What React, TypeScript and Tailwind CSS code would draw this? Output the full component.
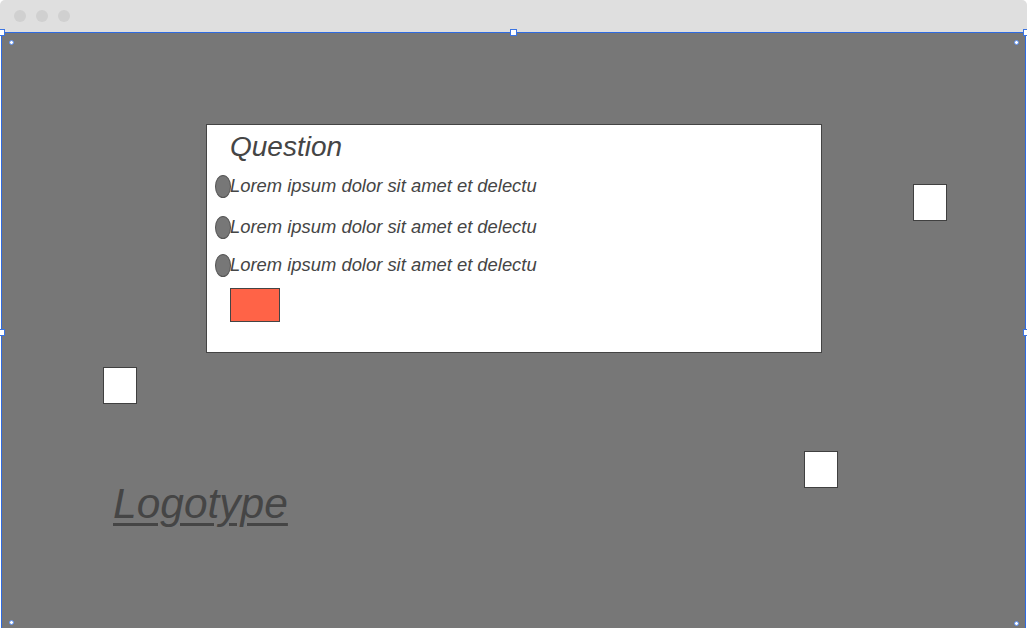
const rows = [
  { label: "Lorem ipsum dolor sit amet et delectu", gap: "mt-[13px]" },
  { label: "Lorem ipsum dolor sit amet et delectu", gap: "mt-[17px]" },
  { label: "Lorem ipsum dolor sit amet et delectu", gap: "mt-[14px]" },
];

// little square resize handles sitting on the selection border
function Handle({ className }: { className: string }) {
  return (
    <div
      className={`absolute h-[7px] w-[7px] border border-[#3b74e2] bg-white ${className}`}
    />
  );
}

function Dot({ className }: { className: string }) {
  return (
    <div
      className={`absolute h-[5px] w-[5px] rounded-full border border-[#5b8ff0] bg-white ${className}`}
    />
  );
}

function Box({ className }: { className: string }) {
  return (
    <div
      className={`absolute h-[37px] w-[34px] border border-[#404040] bg-white ${className}`}
    />
  );
}

export default function App() {
  return (
    <div className="relative h-[628px] w-[1027px] overflow-hidden bg-white font-['Liberation_Sans',Arial,sans-serif]">
      {/* window bar */}
      <div className="flex h-8 items-center gap-[10px] rounded-t-[5px] bg-[#dfdfdf] pl-[14px]">
        <span className="h-3 w-3 rounded-full bg-[#d0d0d0]" />
        <span className="h-3 w-3 rounded-full bg-[#d0d0d0]" />
        <span className="h-3 w-3 rounded-full bg-[#d0d0d0]" />
      </div>

      {/* canvas */}
      <div className="relative ml-px h-[596px] w-[1025px] border border-b-0 border-[#2f6be0] bg-[#777777]">
        <div className="absolute left-[204px] top-[91px] h-[229px] w-[616px] border border-[#444444] bg-white">
          <div className="pl-[23px] pt-2 text-[28px] italic leading-none text-[#454545]">
            Question
          </div>
          {rows.map((row, i) => (
            <div key={i} className={`flex h-6 items-center ${row.gap}`}>
              <span className="ml-2 h-[23px] w-4 shrink-0 rounded-[50%] border border-[#555555] bg-[#777777]" />
              <span className="-ml-px text-[18.4px] italic leading-none text-[#454545]">
                {row.label}
              </span>
            </div>
          ))}
          <div className="ml-[23px] mt-[11px] h-[34px] w-[50px] border border-[#444444] bg-[#ff6347]" />
        </div>

        <Box className="left-[101px] top-[334px]" />
        <Box className="left-[911px] top-[151px]" />
        <Box className="left-[802px] top-[418px]" />

        <div className="absolute left-[111px] top-[450px] text-[42.5px] italic leading-none text-[#454545] underline decoration-[3px] underline-offset-[5px]">
          Logotype
        </div>

        <Dot className="left-[7px] top-[7px]" />
        <Dot className="left-[1012px] top-[7px]" />
        <Dot className="left-[7px] top-[587px]" />
        <Dot className="left-[1012px] top-[588px]" />
      </div>

      <Handle className="left-[-2px] top-[29px]" />
      <Handle className="left-[510px] top-[29px]" />
      <Handle className="left-[1023px] top-[29px]" />
      <Handle className="left-[-2px] top-[329px]" />
      <Handle className="left-[1023px] top-[329px]" />
    </div>
  );
}
